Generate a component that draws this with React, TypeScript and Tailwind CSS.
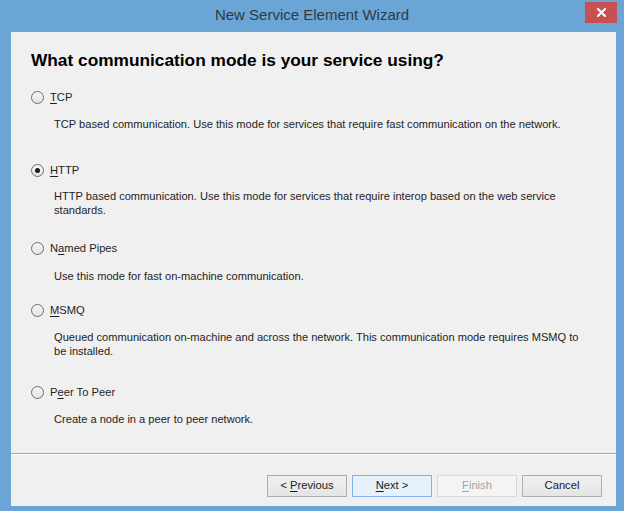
import type { ReactNode } from 'react'

const UI_FONT = "font-['Segoe_UI','Liberation_Sans',Arial,sans-serif]"

interface ModeOption {
  key: string
  label: ReactNode
  description: ReactNode
  checked?: boolean
  rowMargin: string
  descMargin: string
}

function Ul({ children }: { children: ReactNode }) {
  return <span className="underline underline-offset-2 decoration-1">{children}</span>
}

const OPTIONS: ModeOption[] = [
  {
    key: 'tcp',
    label: <><Ul>T</Ul>CP</>,
    description: 'TCP based communication. Use this mode for services that require fast communication on the network.',
    rowMargin: 'mt-[19px]',
    descMargin: 'mt-[12px]',
  },
  {
    key: 'http',
    label: <><Ul>H</Ul>TTP</>,
    description: (
      <>
        HTTP based communication. Use this mode for services that require interop based on the web service
        <br />
        standards.
      </>
    ),
    checked: true,
    rowMargin: 'mt-[31px]',
    descMargin: 'mt-[11px]',
  },
  {
    key: 'pipes',
    label: <>N<Ul>a</Ul>med Pipes</>,
    description: 'Use this mode for fast on-machine communication.',
    rowMargin: 'mt-[23px]',
    descMargin: 'mt-[13px]',
  },
  {
    key: 'msmq',
    label: <><Ul>M</Ul>SMQ</>,
    description: (
      <>
        Queued communication on-machine and across the network. This communication mode requires MSMQ to
        <br />
        be installed.
      </>
    ),
    rowMargin: 'mt-[19px]',
    descMargin: 'mt-[12px]',
  },
  {
    key: 'p2p',
    label: <>P<Ul>e</Ul>er To Peer</>,
    description: 'Create a node in a peer to peer network.',
    rowMargin: 'mt-[26px]',
    descMargin: 'mt-[12px]',
  },
]

function Radio({ checked }: { checked?: boolean }) {
  return (
    <span className="w-[13px] h-[13px] rounded-full border border-[#6e6e6e] bg-gradient-to-b from-[#f6f6f6] to-[#e4e4e4] flex items-center justify-center shrink-0">
      {checked && <span className="w-[5px] h-[5px] rounded-full bg-[#1a1a1a]" />}
    </span>
  )
}

function WizardButton({
  children,
  variant = 'normal',
}: {
  children: ReactNode
  variant?: 'normal' | 'default' | 'disabled'
}) {
  const styles = {
    normal: 'border-[#adadad] bg-gradient-to-b from-[#f0f0f0] to-[#e5e5e5] text-[#1a1a1a]',
    default: 'border-[#7eb4ea] bg-[#e5f1fb] text-[#1a1a1a]',
    disabled: 'border-[#d9d9d9] bg-[#f4f4f4] text-[#a3a3a3]',
  }[variant]
  return (
    <button
      type="button"
      className={`w-[80px] h-[22px] border text-[11.2px] leading-none flex items-center justify-center whitespace-pre ${styles}`}
    >
      {children}
    </button>
  )
}

export default function App() {
  return (
    <div className={`w-[627px] h-[518px] bg-white ${UI_FONT}`}>
      <div className="w-[624px] h-[511px] bg-[#6ba5d6] flex flex-col">
        {/* Title bar */}
        <div className="relative h-[32px] shrink-0 flex items-center justify-center">
          <span className="text-[15px] text-[#2e3a46] -mt-[1px]">New Service Element Wizard</span>
          <button
            type="button"
            className="absolute left-[585px] top-[2px] w-[32px] h-[21px] bg-[#c75050] text-white flex items-center justify-center"
          >
            <svg width="9" height="9" viewBox="0 0 9 9">
              <path d="M1 1 L8 8 M8 1 L1 8" stroke="white" strokeWidth="2" strokeLinecap="square" />
            </svg>
          </button>
        </div>

        {/* Content */}
        <div className="ml-[11px] w-[605px] h-[474px] bg-[#f0f0f0] flex flex-col">
          <div className="flex-1 pl-[20px] pt-[18px]">
            <h1 className="text-[17.3px] leading-[20px] font-bold text-black font-['Liberation_Sans',Arial,sans-serif]">
              What communication mode is your service using?
            </h1>
            {OPTIONS.map((opt) => (
              <div key={opt.key}>
                <div className={`flex items-center gap-[6px] h-[16px] ${opt.rowMargin}`}>
                  <Radio checked={opt.checked} />
                  <span className="text-[11.2px] leading-[16px] text-[#1e1e1e]">{opt.label}</span>
                </div>
                <p className={`pl-[23px] text-[11.1px] leading-[14px] text-[#1e1e1e] whitespace-nowrap ${opt.descMargin}`}>
                  {opt.description}
                </p>
              </div>
            ))}
          </div>

          {/* Button strip */}
          <div className="h-[53px] shrink-0 border-t border-[#a0a0a0] shadow-[inset_0_1px_0_#ffffff] flex justify-end items-start gap-[5px] pr-[14px] pt-[21px]">
            <WizardButton>
              {'< '}
              <Ul>P</Ul>revious
            </WizardButton>
            <WizardButton variant="default">
              <Ul>N</Ul>
              {'ext >'}
            </WizardButton>
            <WizardButton variant="disabled">
              <Ul>F</Ul>inish
            </WizardButton>
            <WizardButton>Cancel</WizardButton>
          </div>
        </div>
      </div>
    </div>
  )
}
